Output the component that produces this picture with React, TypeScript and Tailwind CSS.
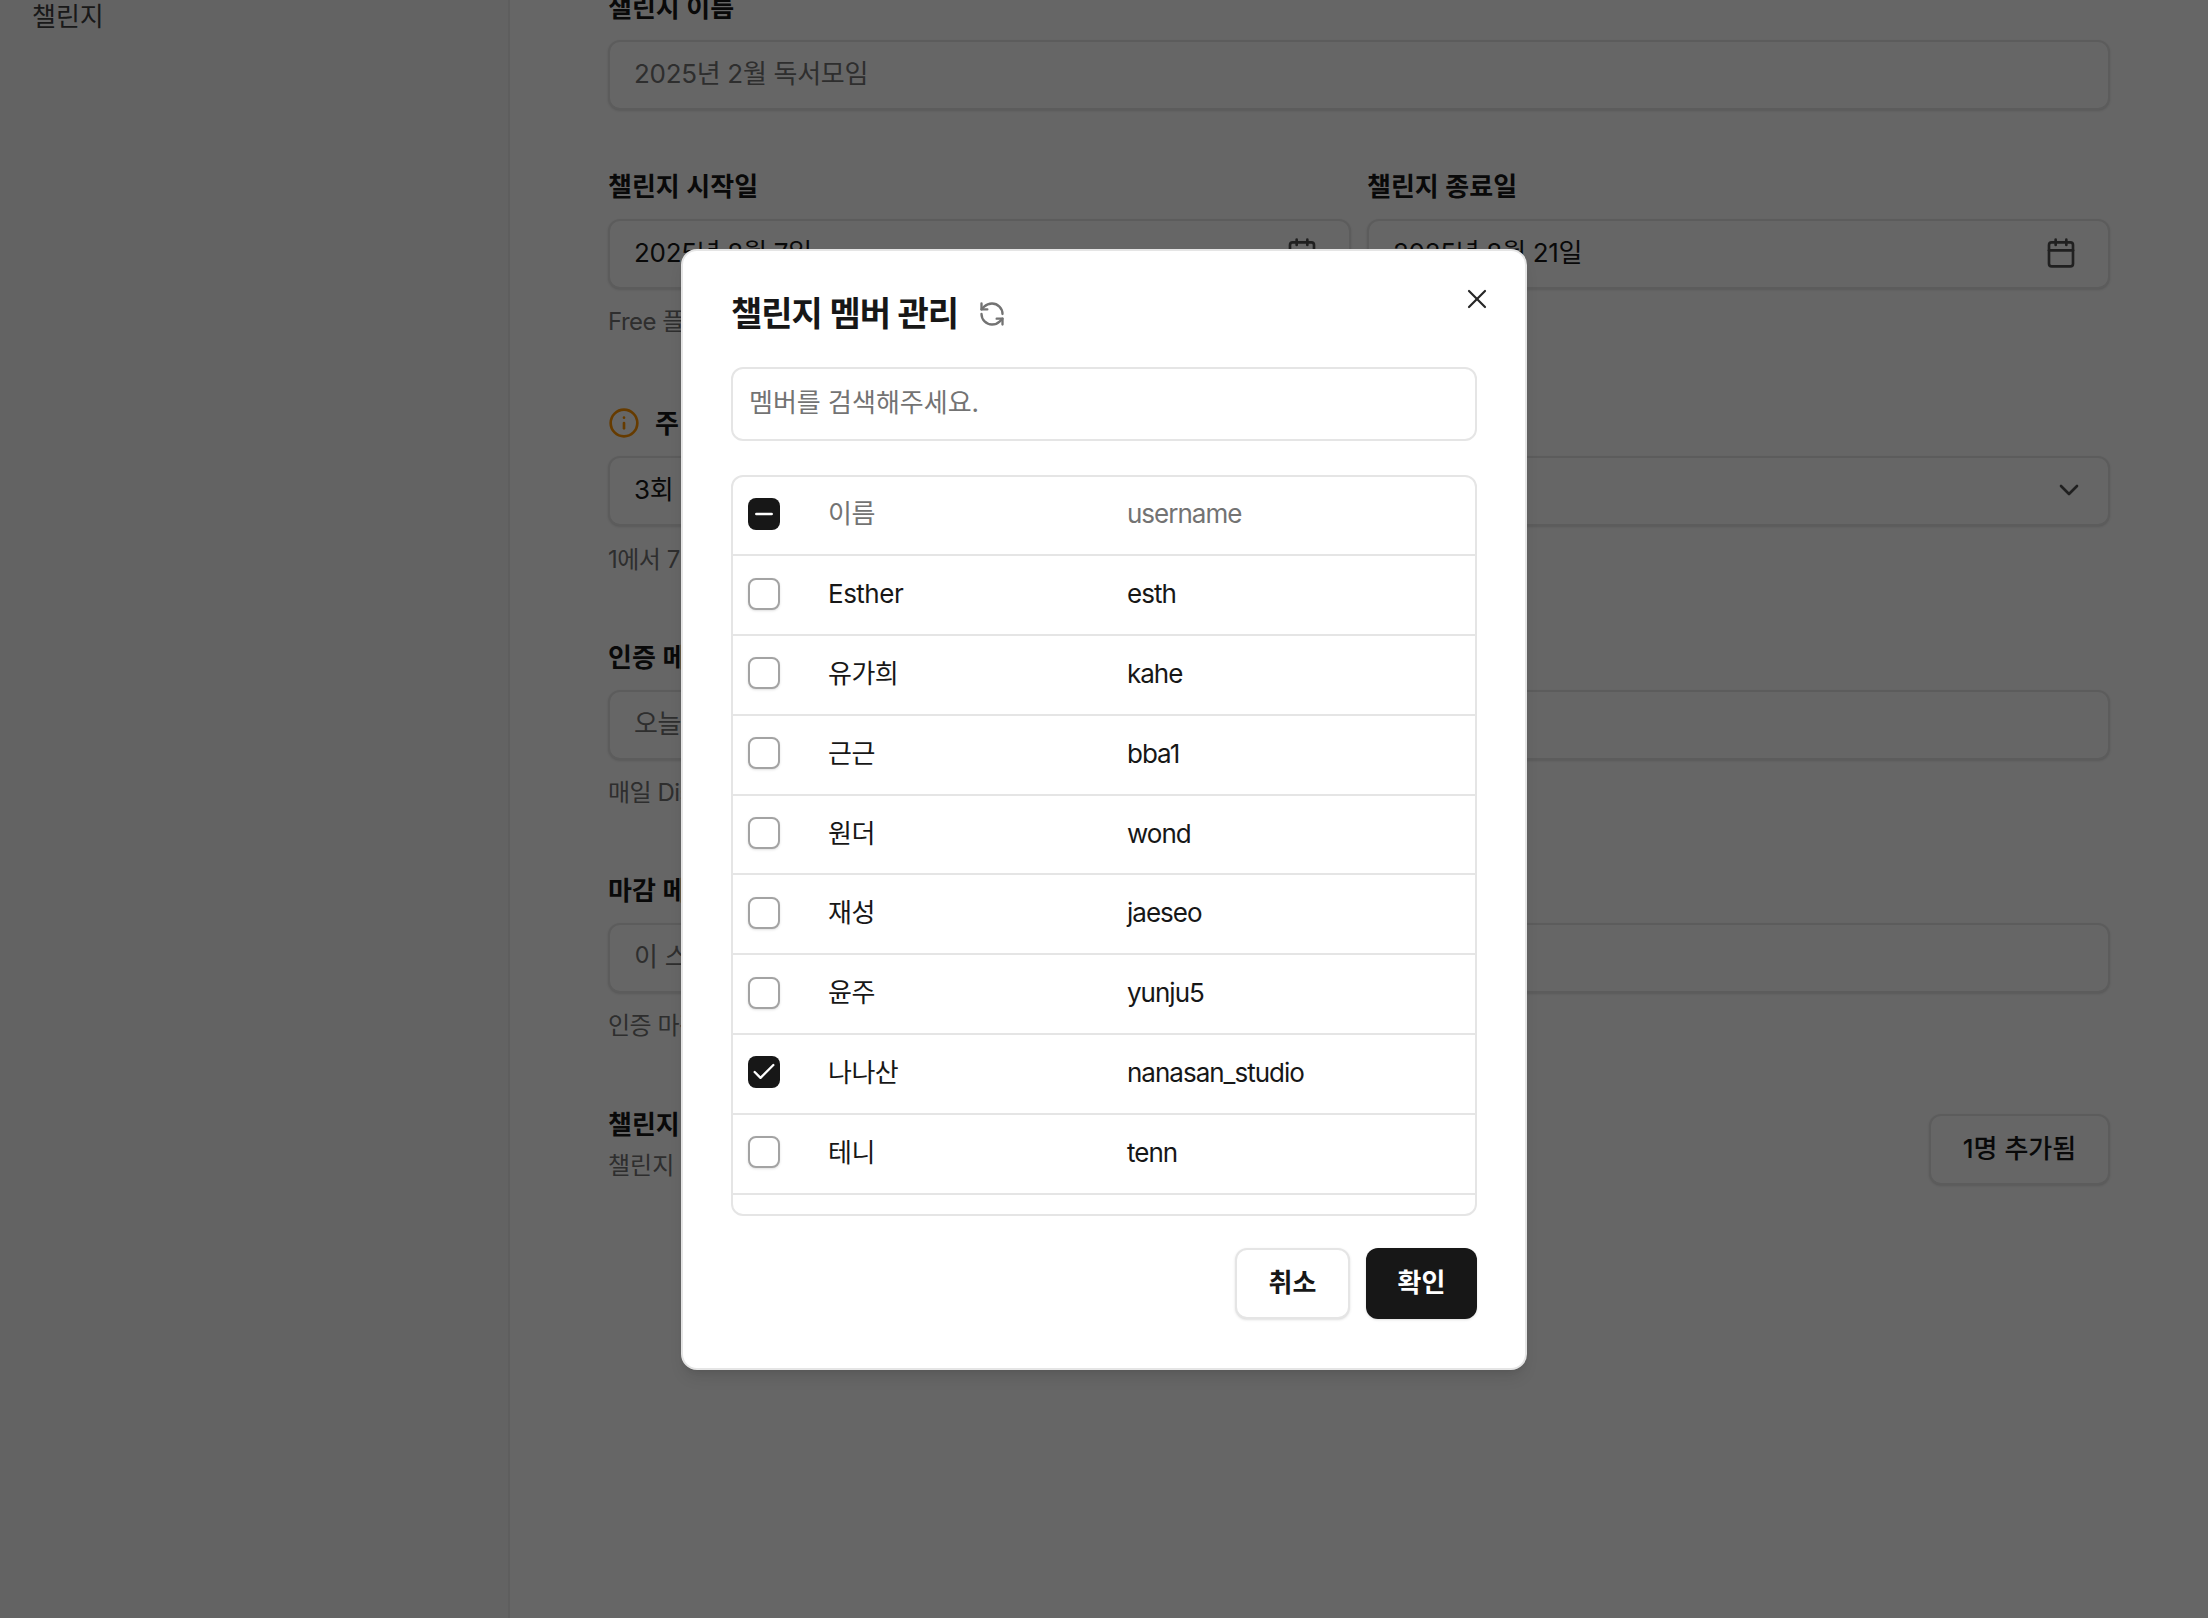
import { Calendar, Check, ChevronDown, Info, Minus, RefreshCcw, X } from 'lucide-react'

const members = [
  { name: 'Esther', username: 'esth' },
  { name: '유가희', username: 'kahe' },
  { name: '근근', username: 'bba1' },
  { name: '원더', username: 'wond' },
  { name: '재성', username: 'jaeseo' },
  { name: '윤주', username: 'yunju5' },
  { name: '나나산', username: 'nanasan_studio', checked: true },
  { name: '테니', username: 'tenn' },
  { name: '', username: '' },
]

const boxClass = 'flex h-[70px] items-center justify-between rounded-xl border-2 border-[#e5e5e5] bg-white pr-[25px] pb-[3px] pl-[24px] text-[26px] tracking-[-0.3px] shadow-sm'

function Field({ label, value, placeholder, help, icon, className }: any) {
  return (
    <div className={className}>
      <p className="mb-[13px] h-[40px] text-[26px] leading-[42px] font-semibold text-[#171717]">{label}</p>
      <div className={boxClass}>
        <span className={placeholder ? 'text-[#737373]' : 'text-[#171717]'}>{value || placeholder}</span>
        {icon}
      </div>
      {help && <p className="mt-[15px] h-[36px] text-[24px] leading-[36px] tracking-[-0.5px] text-[#737373]">{help}</p>}
    </div>
  )
}

function Checkbox({ state }: { state?: 'checked' | 'mixed' }) {
  if (state) {
    return (
      <span className="flex h-[32px] w-[32px] items-center justify-center rounded-lg bg-[#171717] text-white">
        {state === 'checked' ? <Check size={28} /> : <Minus size={26} strokeWidth={2.5} />}
      </span>
    )
  }
  return <span className="h-[32px] w-[32px] rounded-lg border-2 border-[#a3a3a3] bg-white shadow-sm" />
}

function MemberRow({ name, username, state, header }: any) {
  return (
    <div className={`flex h-[79.8px] shrink-0 items-center border-b-2 border-[#e5e5e5] pb-[3px] pl-[15px] text-[26px] ${header ? 'text-[#737373]' : 'text-[#171717]'}`}>
      <Checkbox state={state} />
      <span className="ml-[48px] w-[299px] tracking-[-0.5px]">{name}</span>
      <span className="tracking-[-1px]">{username}</span>
    </div>
  )
}

export default function App() {
  return (
    <div className="relative flex h-[1618px] overflow-hidden bg-white font-['Inter','Noto_Sans_CJK_KR',sans-serif]">
      <aside className="w-[510px] shrink-0 border-r-2 border-[#ececec] bg-[#f8f8f8] pl-[32px]">
        <p className="text-[26px] leading-[33px] text-[#404040]">챌린지</p>
      </aside>

      <main className="-mt-[13px] flex-1 px-[98px]">
        <Field label="챌린지 이름" placeholder="2025년 2월 독서모임" />

        <div className="mt-[56px] grid grid-cols-2 gap-4">
          <Field
            label="챌린지 시작일"
            value="2025년 8월 7일"
            help="Free 플랜"
            icon={<Calendar size={32} className="mr-[6px] text-[#525252]" />}
          />
          <Field
            label="챌린지 종료일"
            value="2025년 8월 21일"
            icon={<Calendar size={32} className="mr-[6px] text-[#525252]" />}
          />
        </div>

        <div className="mt-[63px]">
          <div className="mb-[13px] flex h-[40px] items-center gap-[15px] text-[26px] font-semibold text-[#171717]">
            <Info size={32} className="text-[#ff9500]" />
            <span>주 인증 횟수</span>
          </div>
          <div className={boxClass}>
            <span className="text-[#171717]">3회</span>
            <ChevronDown size={32} className="-mr-[2px] text-[#525252]" />
          </div>
          <p className="mt-[16px] h-[35px] text-[24px] leading-[36px] tracking-[-0.5px] text-[#737373]">1에서 7 사이</p>
        </div>

        <Field className="mt-[60px]" label="인증 메시지" placeholder="오늘의 인증" help="매일 Discord" />
        <Field className="mt-[59px]" label="마감 메시지" placeholder="이 스레드" help="인증 마감" />

        <div className="mt-[61px] flex items-start justify-between">
          <div>
            <p className="h-[40px] text-[26px] leading-[40px] font-semibold text-[#171717]">챌린지 멤버</p>
            <p className="mt-[3px] text-[24px] leading-[36px] text-[#737373]">챌린지 멤버</p>
          </div>
          <div className="mt-[9px] flex h-[71px] w-[181px] items-center justify-center rounded-xl border-2 border-[#e5e5e5] bg-white pb-[3px] text-[26px] font-medium text-[#171717] shadow-sm">
            1명 추가됨
          </div>
        </div>
      </main>

      <div className="absolute inset-0 flex items-center justify-center bg-black/60">
        <div className="relative h-[1121px] w-[846px] rounded-2xl border-2 border-[#e5e5e5] bg-white p-[48px] shadow-lg">
          <button className="absolute top-[32px] right-[32px] text-[#262626]">
            <X size={32} strokeWidth={1.6} />
          </button>

          <div className="-mt-[18px] mb-[20px] flex h-[66px] items-center gap-[20px] text-[34px] font-semibold tracking-[-1px] text-[#171717]">
            <h2>챌린지 멤버 관리</h2>
            <RefreshCcw size={28} className="text-[#737373]" />
          </div>

          <div className="flex h-[74px] items-center rounded-xl border-2 border-[#e5e5e5] bg-white px-[16px] pb-[2px] text-[26px] text-[#737373]">
            멤버를 검색해주세요.
          </div>

          <div className="mt-[34px] flex h-[741px] flex-col overflow-hidden rounded-xl border-2 border-[#e5e5e5]">
            <MemberRow header state="mixed" name="이름" username="username" />
            {members.map((m) => (
              <MemberRow key={m.name + m.username} name={m.name} username={m.username} state={m.checked ? 'checked' : undefined} />
            ))}
          </div>

          <div className="mt-[32px] flex justify-end gap-[16px] text-[26px] font-semibold">
            <button className="h-[71px] w-[115px] rounded-xl border-2 border-[#e5e5e5] bg-white pb-[2px] text-[#171717] shadow-sm">취소</button>
            <button className="h-[71px] w-[111px] rounded-xl bg-[#171717] pb-[2px] text-white shadow-sm">확인</button>
          </div>
        </div>
      </div>
    </div>
  )
}
